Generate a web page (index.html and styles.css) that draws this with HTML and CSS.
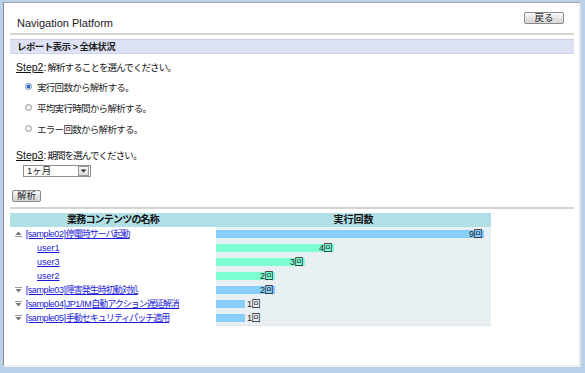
FILE: index.html
```html
<!DOCTYPE html>
<html lang="ja">
<head>
    <meta charset="UTF-8">
    <title>Navigation Platform</title>
    <link rel="stylesheet" href="styles.css">
</head>
<body>
    <div class="window">
        <header class="top">
            <h1>Navigation Platform</h1>
            <button class="btn back">戻る</button>
        </header>

        <div class="crumb">レポート表示 &gt; 全体状況</div>

        <section class="step">
            <p class="step-title"><u>Step2</u>:<span class="jp">解析することを選んでください。</span></p>
            <label class="radio"><span class="dot checked"></span>実行回数から解析する。</label>
            <label class="radio"><span class="dot"></span>平均実行時間から解析する。</label>
            <label class="radio"><span class="dot"></span>エラー回数から解析する。</label>
        </section>

        <section class="step step3">
            <p class="step-title"><u>Step3</u>:<span class="jp">期間を選んでください。</span></p>
            <div class="select">
                <span class="value">1ヶ月</span>
                <span class="arrow">
                    <svg width="7" height="4" viewBox="0 0 7 4"><polygon points="0.5,0.5 6.5,0.5 3.5,3.5" fill="#333"/></svg>
                </span>
            </div>
        </section>

        <div class="actions">
            <button class="btn run">解析</button>
        </div>

        <table class="report">
            <thead>
                <tr>
                    <th class="name-col">業務コンテンツの名称</th>
                    <th class="count-col">実行回数</th>
                </tr>
            </thead>
            <tbody>
                <tr>
                    <td class="name">
                        <svg class="toggle" width="7" height="6" viewBox="0 0 7 6"><polygon points="0.5,4 3.5,0.5 6.5,4" fill="#777"/><line x1="0" y1="5.5" x2="7" y2="5.5" stroke="#999"/></svg>
                        <a href="#"><span class="tag">[sample02]</span>停電時サーバ起動</a>
                    </td>
                    <td class="graph"><div class="meter"><span class="bar job" style="width:268px"></span><span class="num">9回</span></div></td>
                </tr>
                <tr class="user">
                    <td class="name"><a href="#">user1</a></td>
                    <td class="graph"><div class="meter"><span class="bar usr" style="width:118px"></span><span class="num">4回</span></div></td>
                </tr>
                <tr class="user">
                    <td class="name"><a href="#">user3</a></td>
                    <td class="graph"><div class="meter"><span class="bar usr" style="width:89px"></span><span class="num">3回</span></div></td>
                </tr>
                <tr class="user">
                    <td class="name"><a href="#">user2</a></td>
                    <td class="graph"><div class="meter"><span class="bar usr" style="width:59px"></span><span class="num">2回</span></div></td>
                </tr>
                <tr>
                    <td class="name">
                        <svg class="toggle" width="7" height="6" viewBox="0 0 7 6"><line x1="0" y1="0.5" x2="7" y2="0.5" stroke="#999"/><polygon points="0.5,2 6.5,2 3.5,5.5" fill="#777"/></svg>
                        <a href="#"><span class="tag">[sample03]</span>障害発生時初動対処</a>
                    </td>
                    <td class="graph"><div class="meter"><span class="bar job" style="width:59px"></span><span class="num">2回</span></div></td>
                </tr>
                <tr>
                    <td class="name">
                        <svg class="toggle" width="7" height="6" viewBox="0 0 7 6"><line x1="0" y1="0.5" x2="7" y2="0.5" stroke="#999"/><polygon points="0.5,2 6.5,2 3.5,5.5" fill="#777"/></svg>
                        <a href="#"><span class="tag">[sample04]JP1/IM</span>自動アクション遅延解消</a>
                    </td>
                    <td class="graph"><div class="meter"><span class="bar job" style="width:29px"></span><span class="num out">1回</span></div></td>
                </tr>
                <tr>
                    <td class="name">
                        <svg class="toggle" width="7" height="6" viewBox="0 0 7 6"><line x1="0" y1="0.5" x2="7" y2="0.5" stroke="#999"/><polygon points="0.5,2 6.5,2 3.5,5.5" fill="#777"/></svg>
                        <a href="#"><span class="tag">[sample05]</span>手動セキュリティパッチ適用</a>
                    </td>
                    <td class="graph"><div class="meter"><span class="bar job" style="width:29px"></span><span class="num out">1回</span></div></td>
                </tr>
            </tbody>
        </table>
    </div>
</body>
</html>
```

FILE: styles.css
```css
:root {
    --font: "Liberation Sans", "Noto Sans CJK JP", sans-serif;
    --frame-color: #b9d1ea;
    --link-color: #1a1ad8;
    --head-color: #b0e0e6;
    --job-color: #87cefa;
    --user-color: #7fffd4;
    --graph-background: #e9f0f4;
}

* {
    margin: 0;
    padding: 0;
    box-sizing: border-box;
}

html, body {
    height: 373px;
    overflow: hidden;
}

body {
    font-family: var(--font);
    font-size: 9.5px;
    color: #222;
    background-color: var(--frame-color);
    padding: 2px 4px 6px 3px;
}

.window {
    height: 365px;
    background: #fff;
    border-left: 1px solid #8c8c8c;
    border-top: 1px solid #a4a4a4;
    border-right: 2px solid #e6e6e6;
    border-bottom: 2px solid #ededed;
    padding: 0 5px 0 6px;
}

/* header */
.top {
    height: 32px;
    display: flex;
    justify-content: space-between;
    align-items: flex-start;
    padding: 0 10px 0 7px;
    border-bottom: 2px solid #d4d4d4;
}

.top h1 {
    font-size: 11px;
    font-weight: normal;
    line-height: 13px;
    margin-top: 14px;
    color: #222;
}

.btn {
    font-family: var(--font);
    font-size: 9.5px;
    line-height: 10px;
    color: #222;
    height: 12px;
    background: linear-gradient(#fbfbfb, #e4e4e4 50%, #d6d6d6);
    border: 1px solid #8a8a8a;
    border-radius: 2px;
    cursor: pointer;
}

.back {
    width: 40px;
    margin-top: 9px;
}

.crumb {
    margin-top: 4px;
    height: 15px;
    line-height: 13px;
    padding-left: 7px;
    background: #dde3f4;
    border-top: 1px solid #c8cfe2;
    border-bottom: 1px solid #d0d6e8;
    font-weight: bold;
    letter-spacing: -0.6px;
}

/* steps */
.step {
    padding-left: 6px;
}

.step-title {
    margin-top: 5px;
    font-size: 10.5px;
    line-height: 16px;
    color: #111;
}

.step-title .jp {
    font-size: 9.5px;
    letter-spacing: -0.9px;
    margin-left: 1px;
}

.radio {
    display: flex;
    align-items: center;
    height: 21px;
    padding-left: 9px;
    letter-spacing: -0.7px;
}

.dot {
    width: 7px;
    height: 7px;
    border-radius: 50%;
    border: 1px solid #9a9a9a;
    background: radial-gradient(#fdfdfd, #dedede);
    margin-right: 5px;
}

.dot.checked {
    background: radial-gradient(#2b63c4 0 1.6px, #cfe0f4 2px);
    border-color: #6f8fb8;
}

.step3 .step-title {
    margin-top: 8px;
}

.select {
    margin: 1px 0 0 7px;
    width: 68px;
    height: 12px;
    border: 1px solid #8d8d8d;
    display: flex;
    justify-content: space-between;
    align-items: center;
}

.select .value {
    padding-left: 3px;
    line-height: 10px;
}

.select .arrow {
    width: 11px;
    height: 10px;
    margin-right: 1px;
    border: 1px solid #9a9a9a;
    background: linear-gradient(#f8f8f8, #dadada);
    display: flex;
    align-items: center;
    justify-content: center;
}

.actions {
    margin-top: 13px;
    padding: 0 0 5px 2px;
    border-bottom: 2px solid #d4d4d4;
}

.run {
    width: 29px;
}

/* report table */
.report {
    margin-top: 4px;
    width: 481px;
    border-collapse: collapse;
    border-spacing: 0;
}

.report th {
    height: 14px;
    line-height: 14px;
    padding: 0;
    background: var(--head-color);
    font-size: 10px;
    font-weight: bold;
    color: #111;
    letter-spacing: -0.8px;
}

.report .count-col {
    letter-spacing: 0;
}

.report .name-col {
    width: 206px;
}

.report td {
    height: 14px;
    padding: 0;
    line-height: 14px;
}

.report td.name {
    padding-left: 5px;
    white-space: nowrap;
}

.report .user td.name {
    padding-left: 27px;
}

.toggle {
    margin-right: 1px;
    vertical-align: 0;
}

.report a {
    font-size: 9px;
    color: var(--link-color);
    letter-spacing: -1px;
}

.report a .tag {
    letter-spacing: -0.4px;
}

.report .user a {
    letter-spacing: 0;
}

.report td.graph {
    background: var(--graph-background);
}

.report tr:last-child td.graph {
    border-bottom: 1px dotted #d4dde3;
}

.meter {
    display: flex;
    align-items: center;
    height: 14px;
}

.bar {
    height: 8px;
    flex: none;
}

.bar.job {
    background: var(--job-color);
}

.bar.usr {
    background: var(--user-color);
}

.num {
    margin-left: -15px;
    font-size: 9px;
    line-height: 10px;
    letter-spacing: -0.5px;
    color: #222;
}

.num.out {
    margin-left: 2px;
}
```
